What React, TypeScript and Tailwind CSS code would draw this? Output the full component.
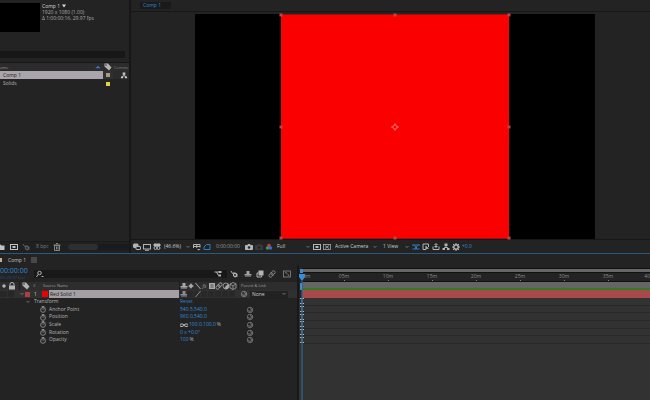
import React from "react";

type Kids = { children?: React.ReactNode };

function Icon({ children, className = "" }: Kids & { className?: string }) {
  return (
    <svg viewBox="0 0 16 16" className={`h-2 w-2 shrink-0 ${className}`} fill="none" stroke="currentColor" strokeWidth="2">
      {children}
    </svg>
  );
}

const GLYPHS = {
  windows: <><rect x="1" y="2" width="9" height="7" rx="1" fill="currentColor" /><rect x="6" y="7" width="9" height="6" rx="1" fill="#232323" /></>,
  monitor: <><rect x="1" y="3" width="14" height="9" /><path d="M4 14.500h8" /></>,
  goggles: <><path d="M2 2h12v4H2z" fill="currentColor" /><circle cx="5" cy="10" r="3" /><circle cx="11" cy="10" r="3" /></>,
  grid: <><path d="M1 10V3h13v6M7.500 3v7M1 7h13" /><path d="M8 12h7l-3.500 3z" fill="currentColor" stroke="none" /></>,
  mask: <path d="M2 13V8l5-5h7v10z" />,
  camera: <><path d="M1 5h3l2-2h4l2 2h3v8H1z" fill="currentColor" /><circle cx="8" cy="9" r="2.500" fill="#232323" stroke="none" /></>,
  region: <><rect x="1" y="3" width="14" height="10" /><rect x="5" y="6" width="6" height="4" fill="currentColor" stroke="none" /></>,
  checker: <><rect x="1" y="3" width="14" height="10" strokeWidth="1.500" /><path d="M4 5l8 6M12 5l-8 6" strokeWidth="1.500" /></>,
  toggle: <><path d="M0 4h16M3 4l4 3v5M13 4L9 7v5M1 12h14" /></>,
  fast: <><path d="M13 8V2H2v11h6" /><path d="M7 5l7 6-5 1-2 3z" fill="currentColor" stroke="none" /></>,
  share: <><path d="M2 7v6h12V7M5 7h6M8 10V2M5 4l3-3 3 3" /></>,
  flow: <><path d="M8 4v5M4 11l1-2h6l1 2" /><path d="M5 1h6v5H5zM1 10h5v4H1zM10 10h5v4h-5z" fill="currentColor" stroke="none" /></>,
  aperture: <><circle cx="8" cy="8" r="4.500" strokeWidth="3" /><path d="M8 0v3M8 13v3M0 8h3M13 8h3M2 2l2 2M12 12l2 2M14 2l-2 2M4 12l-2 2" /></>,
  tag: <><path d="M1 1h7l7 8-5 6-9-8z" fill="currentColor" stroke="none" /><circle cx="4" cy="4" r="1.500" fill="#232323" stroke="none" /></>,
  lock: <><path d="M4 7V4a4 3 0 018 0v3" /><path d="M2 7h12v8H2z" fill="currentColor" stroke="none" /></>,
  shy: <><path d="M1 8h14v3H1zM5 2h6v6H5z" fill="currentColor" stroke="none" /><path d="M8 8v6M4 11v3M12 11v3" /></>,
  sun: <><circle cx="8" cy="8" r="3" fill="currentColor" /><path d="M8 2v12M2 8h12" strokeWidth="1" /></>,
  slash: <path d="M3 2l10 12" />,
  quality: <path d="M3 14L13 2" />,
  film: <><path d="M2 2h12v12H2z" fill="currentColor" stroke="none" /><path d="M5 6h6M5 10h6" stroke="#333" strokeWidth="1.500" /></>,
  blur: <><ellipse cx="10" cy="6" rx="3.500" ry="5" transform="rotate(35 10 6)" strokeWidth="1.500" /><ellipse cx="6" cy="10" rx="3.500" ry="5" transform="rotate(35 6 10)" strokeWidth="1.500" /></>,
  half: <><circle cx="8" cy="8" r="6" strokeWidth="1.500" /><path d="M8 2a6 6 0 010 12z" fill="currentColor" stroke="none" transform="rotate(40 8 8)" /></>,
  cube: <path d="M8 1l6 3v8l-6 3-6-3V4zM2 4l6 4 6-4M8 8v7" strokeWidth="1.500" />,
  stopwatch: <><circle cx="8" cy="9" r="5.500" strokeWidth="1.500" /><path d="M5 1h6M8 1v3M12 3l2 2M8 9V6" strokeWidth="1.500" /></>,
  whip: <><circle cx="8" cy="8" r="5.500" strokeWidth="1.500" /><path d="M5 8a3 3 0 106 0M8 5a3 3 0 013 3h3" strokeWidth="1.500" /></>,
  folder: <path d="M1 3h6l2 2h6v9H1z" fill="currentColor" stroke="none" />,
  trash: <><path d="M3 5h10v10H3zM1 4h14M6 1h4" /><path d="M7 7v6M10 7v6" /></>,
  search: <><circle cx="7" cy="6" r="3.500" /><path d="M4 9l-3 5M11 13h4" /></>,
  tree: <><path d="M1 4h8M5 4l4 7" /><path d="M9 2h6v4H9zM9 9h5v4H9z" fill="currentColor" stroke="none" /></>,
  draft: <><path d="M2 2l3 5 4-2" /><path d="M6 7l5-2 4 3v5l-5 2-4-3z" fill="currentColor" stroke="none" /><circle cx="10" cy="10" r="2" fill="#232323" stroke="none" /></>,
  frames: <><path d="M5 1h10v10H5z" fill="currentColor" stroke="none" /><path d="M5 6H2v8h9v-3" /></>,
  graph: <><rect x="1" y="2" width="14" height="12" strokeWidth="1.500" /><path d="M4 5c3 0 5 2 8 7" strokeWidth="1.500" /></>,
  menu: <path d="M2 4h12M2 8h12M2 12h12" strokeWidth="1.500" />,
  chain: <><rect x="0" y="6" width="7" height="5" rx="2" /><rect x="9" y="6" width="7" height="5" rx="2" /><path d="M5 8h6" /></>,
  dot: <circle cx="8" cy="8" r="3.500" fill="currentColor" stroke="none" />,
};

type Glyph = keyof typeof GLYPHS;

function Tool({ glyph, label, className = "text-[#b4b4b4]" }: { glyph: Glyph; label: string; className?: string }) {
  return (
    <button type="button" aria-label={label} className={`flex w-2.5 shrink-0 items-center justify-center ${className}`}>
      <Icon>{GLYPHS[glyph]}</Icon>
    </button>
  );
}

function Pick({ label, value, className }: { label: string; value: string; className: string }) {
  return (
    <span className={`relative flex shrink-0 items-center ${className}`}>
      <select aria-label={label} className="w-full appearance-none bg-transparent text-[5px] leading-[7px] text-[#cccccc] outline-none">
        <option>{value}</option>
      </select>
      <svg viewBox="0 0 8 8" className="pointer-events-none absolute right-0.5 h-1 w-1" fill="none" stroke="#8a8a8a" strokeWidth="1.500">
        <path d="M1 2l3 3 3-3" />
      </svg>
    </span>
  );
}

function ProjectPanel() {
  return (
    <section className="flex w-[129px] shrink-0 flex-col bg-[#232323]">
      <div className="flex h-[51px] gap-0.5 pt-[3px]">
        <div className="h-[29px] w-10 bg-black" />
        <div className="text-[5px] leading-[6px] text-[#aaaaaa]">
          <div className="flex items-center gap-0.5 font-medium text-[#d8d8d8]">
            Comp 1
            <svg viewBox="0 0 8 8" className="h-1 w-1"><path d="M0 1h8L4 7z" fill="#dcdcdc" /></svg>
          </div>
          <div>1920 x 1080 (1.00)</div>
          <div className="whitespace-nowrap">Δ 1:00:00:16, 29.97 fps</div>
        </div>
      </div>
      <input aria-label="Search project" className="mr-1 h-[7px] bg-[#171717] text-[5px] text-[#b0b0b0] outline-none" />
      <table className="mt-1 w-full table-fixed border-collapse text-[5px] leading-[7px]">
        <colgroup><col /><col className="w-2.5" /><col className="w-4" /></colgroup>
        <thead>
          <tr className="h-2 border-t border-[#171717] bg-[#2c2c2c] text-left text-[4px] text-[#999999]">
            <th className="p-0 font-normal">
              <div className="flex items-center justify-between pr-0.5">
                <span>ame</span>
                <svg viewBox="0 0 8 6" className="h-1 w-1.5"><path d="M0 5l4-4 4 4z" fill="#2f7cc0" /></svg>
              </div>
            </th>
            <th className="p-0 text-[#b4b4b4]"><Icon className="mx-auto h-1.5 w-1.5">{GLYPHS.tag}</Icon></th>
            <th className="p-0 pl-px font-normal whitespace-nowrap text-[#808080]">Comme</th>
          </tr>
        </thead>
        <tbody>
          <tr className="h-2">
            <td className="bg-[#aaa5aa] p-0 pl-[3px] text-[#1c1c1c]">Comp 1</td>
            <td className="bg-[#303030] p-0"><div className="mx-auto h-1 w-1 bg-[#a39c7d]" /></td>
            <td className="bg-[#2a2a2a] p-0 pl-1.5 text-[#c8c8c8]"><Icon className="mx-auto h-[7px]">{GLYPHS.flow}</Icon></td>
          </tr>
          <tr className="h-[9px] text-[#b4b4b4]">
            <td className="p-0 pl-[3px]">Solids</td>
            <td className="p-0"><div className="mx-auto h-1 w-1 bg-[#e2d44a]" /></td>
            <td className="p-0" />
          </tr>
        </tbody>
      </table>
      <div className="mt-auto flex h-3 items-center border-t border-[#1a1a1a] bg-[#202020] pb-0.5 text-[5px]">
        <Tool glyph="folder" label="New folder" className="-ml-1 text-[#c0c0c0]" />
        <Tool glyph="region" label="New composition" className="ml-[3px] text-[#c0c0c0]" />
        <Tool glyph="draft" label="Project settings" className="ml-0.5 text-[#606060]" />
        <button type="button" className="ml-[5px] w-4 text-left text-[#7c7c7c]">8 bpc</button>
        <Tool glyph="trash" label="Delete" className="text-[#858585]" />
        <div className="ml-1.5 flex h-1.5 flex-1 bg-[#1b1b1f]"><div className="w-[30px] rounded-full bg-[#2f2f2f]" /></div>
      </div>
    </section>
  );
}

const HANDLES = [
  "left-0 top-0", "left-1/2 top-0", "left-full top-0",
  "left-0 top-1/2", "left-full top-1/2",
  "left-0 top-full", "left-1/2 top-full", "left-full top-full",
];

function Viewer() {
  return (
    <section className="flex min-w-0 flex-1 flex-col border-l-2 border-[#171717] bg-[#232323]">
      <div className="flex h-3 items-center border-b border-[#171717] px-[9px]">
        <button type="button" className="h-[7px] w-[31px] bg-[#1a1a1c] pl-[3px] text-left text-[5px] leading-[7px] text-[#3289d6]">Comp 1</button>
      </div>
      <div className="flex flex-1 pt-0.5 pr-[55px] pl-16">
        <div className="relative flex flex-1 justify-center bg-black">
          <div className="relative w-[57.2%] border-y border-[#9c1010] bg-[#fa0000]">
            {HANDLES.map((place) => (
              <i key={place} className={`absolute h-[3px] w-[3px] -translate-x-1/2 -translate-y-1/2 bg-[#b84848] ${place}`} />
            ))}
            <svg viewBox="0 0 16 16" className="absolute top-1/2 left-1/2 h-2 w-2 -translate-x-1/2 -translate-y-1/2" fill="none" stroke="#ee8080" strokeWidth="1.500">
              <circle cx="8" cy="8" r="4.500" /><path d="M8 0v6M8 10v6M0 8h6M10 8h6" />
            </svg>
          </div>
        </div>
      </div>
      <div className="flex h-[14px] items-center border-t border-[#171717] pl-px text-[5px] text-[#b0b0b0]">
        <Tool glyph="windows" label="Always preview" />
        <Tool glyph="monitor" label="Primary viewer" />
        <Tool glyph="goggles" label="Immersive view" />
        <Pick label="Magnification" value="(46.6%)" className="ml-0.5 w-7" />
        <Tool glyph="grid" label="Guides" />
        <Tool glyph="mask" label="Mask visibility" className="text-[#2f7cc0]" />
        <button type="button" className="ml-1 w-7 text-left text-[#959595]">0:00:00:00</button>
        <Tool glyph="camera" label="Take snapshot" />
        <Tool glyph="camera" label="Show snapshot" className="text-[#393939]" />
        <button type="button" aria-label="Channels" className="flex w-2.5 justify-center">
          <svg viewBox="0 0 16 16" className="h-2 w-2">
            <circle cx="8" cy="5" r="3.500" fill="#c93c3c" /><circle cx="5" cy="10" r="3.500" fill="#35a04c" /><circle cx="11" cy="10" r="3.500" fill="#4068d8" />
          </svg>
        </button>
        <Pick label="Resolution" value="Full" className="ml-[3px] w-[35px]" />
        <Tool glyph="region" label="Region of interest" />
        <Tool glyph="checker" label="Transparency grid" />
        <Pick label="Camera" value="Active Camera" className="ml-[3px] w-11" />
        <Pick label="Views" value="1 View" className="ml-1 w-7" />
        <Tool glyph="toggle" label="Pixel aspect" className="text-[#2f7cc0]" />
        <Tool glyph="fast" label="Fast previews" />
        <Tool glyph="share" label="Timeline" />
        <Tool glyph="flow" label="Flowchart" />
        <Tool glyph="aperture" label="Reset exposure" className="text-[#b4b4b4]" />
        <button type="button" className="ml-px text-[#3289d6]">+0.0</button>
      </div>
    </section>
  );
}

const PROPERTIES = [
  { name: "Anchor Point", value: "540.5,540.0" },
  { name: "Position", value: "960.0,540.0" },
  { name: "Scale", value: "100.0,100.0", unit: "%", linked: true },
  { name: "Rotation", value: "0 x +0.0°" },
  { name: "Opacity", value: "100", unit: "%" },
];

const SWITCHES: Glyph[] = ["shy", "sun", "slash", "film", "film", "blur", "half", "cube"];
const MARKS = ["05m", "10m", "15m", "20m", "25m", "30m", "35m"];

function LayerColumn() {
  return (
    <div className="flex w-[299px] shrink-0 flex-col border-r-2 border-[#181818] text-[5px]">
      <div className="flex h-[17px] items-center">
        <div className="flex w-7 flex-col whitespace-nowrap">
          <button type="button" className="text-left text-[7px] leading-[8px] text-[#2f8ad8]">00:00:00</button>
          <span className="text-[4px] leading-[6px] text-[#235078]">00 (29.97 fps)</span>
        </div>
        <label className="ml-1.5 flex h-2 w-[193px] items-center bg-[#181818] pl-0.5 text-[#b4b4b4]">
          <Icon>{GLYPHS.search}</Icon>
          <input aria-label="Search layers" className="h-2 w-full bg-transparent outline-none" />
        </label>
        <div className="-ml-3.5 flex items-center">
          <Tool glyph="tree" label="Mini-flowchart" />
          <Tool glyph="draft" label="Draft 3D" className="ml-1.5 text-[#b4b4b4]" />
          <Tool glyph="shy" label="Hide shy layers" className="ml-1 text-[#a0a0a0]" />
          <Tool glyph="frames" label="Frame blending" className="ml-0.5 text-[#b4b4b4]" />
          <Tool glyph="blur" label="Motion blur" className="ml-0.5 text-[#909090]" />
          <Tool glyph="graph" label="Graph editor" className="ml-[5px] text-[#909090]" />
        </div>
      </div>
      <div className="flex h-2 items-center bg-[#2d2d2d] text-[4px] leading-[8px] text-[#a0a0a0]">
        <div className="flex w-[19px] shrink-0 items-center text-[#b4b4b4]">
          <Icon>{GLYPHS.dot}</Icon>
          <Icon className="h-1.5">{GLYPHS.lock}</Icon>
        </div>
        <span className="flex w-3 justify-center border-l border-[#1c1c1c] text-[#b4b4b4]"><Icon className="h-1.5 w-1.5">{GLYPHS.tag}</Icon></span>
        <span className="w-3 pl-0.5">#</span>
        <span className="w-[136px]">Source Name</span>
        <div className="flex w-[59px] border-l border-[#1c1c1c] text-[#a8a8a8]">
          {SWITCHES.map((glyph, i) => (
            <span key={i} className="flex h-2 w-[7px] items-center justify-center">
              {i === 3 ? <span className="text-[5px] leading-[8px] italic">fx</span> : <Icon className="h-1.5 w-1.5">{GLYPHS[glyph]}</Icon>}
            </span>
          ))}
        </div>
        <span className="flex-1 border-l border-[#1c1c1c] pl-0.5">Parent &amp; Link</span>
      </div>
      <div className="flex h-2 items-center bg-[#303030] leading-[8px]">
        <span className="h-1.5 w-[7px] bg-[#272727]" />
        <span className="ml-px h-1.5 w-1.5 bg-[#272727]" />
        <button type="button" aria-label="Collapse layer" className="ml-1 flex w-[7px] justify-center text-[#8a8a8a]">
          <svg viewBox="0 0 8 8" className="h-1 w-1" fill="none" stroke="currentColor" strokeWidth="1.500"><path d="M1 2l3 3 3-3" /></svg>
        </button>
        <span className="h-[5px] w-[5px] bg-[#ad3f44]" />
        <span className="w-3 pl-1 text-[#c8c8c8]">1</span>
        <span className="h-1.5 w-1.5 bg-[#ee0000]" />
        <span className="ml-px h-2 w-[130px] bg-[#a39fa3] pl-px leading-[8px] text-[#1c1c1c]">Red Solid 1</span>
        <div className="flex w-[60px] gap-px pl-px text-[#8c8c8c]">
          {Array.from({ length: 8 }, (_, i) => (
            <span key={i} className="flex h-1.5 w-1.5 items-center bg-[#282828]">
              {i === 0 && <Icon className="h-1.5 w-1.5">{GLYPHS.shy}</Icon>}
              {i === 2 && <Icon className="h-1.5 w-1.5">{GLYPHS.quality}</Icon>}
            </span>
          ))}
        </div>
        <Tool glyph="whip" label="Parent pick whip" className="text-[#8c8c8c]" />
        <Pick label="Parent" value="None" className="ml-px h-[7px] w-[38px] bg-[#222222] pl-0.5" />
      </div>
      <div className="grid h-[46px] grid-rows-6 text-[#b6b6b6]">
        <div className="flex items-center">
          <button type="button" className="ml-[26px] flex w-[154px] items-center gap-1 text-left">
            <svg viewBox="0 0 8 8" className="h-1 w-1" fill="none" stroke="#8a8a8a" strokeWidth="1.500"><path d="M1 2l3 3 3-3" /></svg>
            Transform
          </button>
          <button type="button" className="text-[#2d80c8]">Reset</button>
        </div>
        {PROPERTIES.map((p) => (
          <div key={p.name} className="flex items-center">
            <button type="button" aria-label={`Animate ${p.name}`} className="ml-[39px] text-[#b4b4b4]"><Icon className="h-[7px]">{GLYPHS.stopwatch}</Icon></button>
            <span className="ml-0.5 w-[131px]">{p.name}</span>
            <span className="flex w-[65px] items-center gap-px whitespace-nowrap">
              {p.linked && <Icon className="h-1.5 w-1.5">{GLYPHS.chain}</Icon>}
              <button type="button" className="text-[#318cda]">{p.value}</button>
              {p.unit}
            </span>
            <Tool glyph="whip" label={`${p.name} pick whip`} className="text-[#808080]" />
          </div>
        ))}
      </div>
    </div>
  );
}

function TimeColumn() {
  return (
    <div className="relative flex min-w-0 flex-1 flex-col overflow-hidden bg-[#323232]">
      <div className="h-[3px] bg-[#232323]" />
      <div className="bg-[#232323] pl-[3px]">
        <div className="h-[5px] border-y border-[#111111] bg-[#666666]" />
        <div className="flex h-[9px] border-b border-[#111111] text-[5px] leading-[7px] text-[#8c8c8c]">
          <span className="w-5 shrink-0 pl-px">0m</span>
          {MARKS.map((mark) => (
            <span key={mark} className="flex min-w-0 flex-1 flex-col items-center">
              {mark}
              <i className="h-px w-px bg-[#858585]" />
            </span>
          ))}
          <span className="w-5 text-right">40</span>
        </div>
        <div className="h-1.5 bg-[#656565]" />
        <div className="h-0.5 bg-[#2e7d25]" />
        <div className="h-2 bg-[#a84a4c]" />
      </div>
      <div className="grid h-[46px] grid-rows-6">
        {Array.from({ length: 6 }, (_, i) => (
          <div key={i} className="flex items-center border-b border-[#292929] pl-px">
            <svg viewBox="0 0 4 6" className="h-1.5 w-1" fill="none" stroke="#a8bccb"><path d="M0 .5h4M2 0v6M0 5.500h4" /></svg>
          </div>
        ))}
      </div>
      <div className="absolute top-4 bottom-0 left-0.5 w-0.5 bg-[#2f5f86]/70" />
      <svg viewBox="0 0 6 22" className="absolute top-1 left-0 h-[22px] w-1.5" fill="#3d8bd0">
        <path d="M1 0h3v4H1zM0 5h6v3L3 12 0 8zM1 14h2v7H1z" />
      </svg>
    </div>
  );
}

export default function App() {
  return (
    <main className="flex h-screen flex-col overflow-hidden bg-[#232323] font-['Open_Sans','Noto_Sans',sans-serif]">
      <div className="flex h-[253px] shrink-0">
        <ProjectPanel />
        <Viewer />
      </div>
      <section className="flex min-h-0 flex-1 flex-col border-t border-[#285a7c]">
        <div className="flex h-[11px] shrink-0 items-center text-[5px] text-[#c4c4c4]">
          <span className="h-1 w-0.5 bg-[#c2b090]" />
          <button type="button" className="ml-1.5 leading-[8px]">Comp 1</button>
          <button type="button" aria-label="Panel menu" className="ml-1 text-[#8a8a8a]"><Icon className="h-1.5 w-1.5">{GLYPHS.menu}</Icon></button>
        </div>
        <div className="flex min-h-0 flex-1">
          <LayerColumn />
          <TimeColumn />
        </div>
      </section>
    </main>
  );
}
